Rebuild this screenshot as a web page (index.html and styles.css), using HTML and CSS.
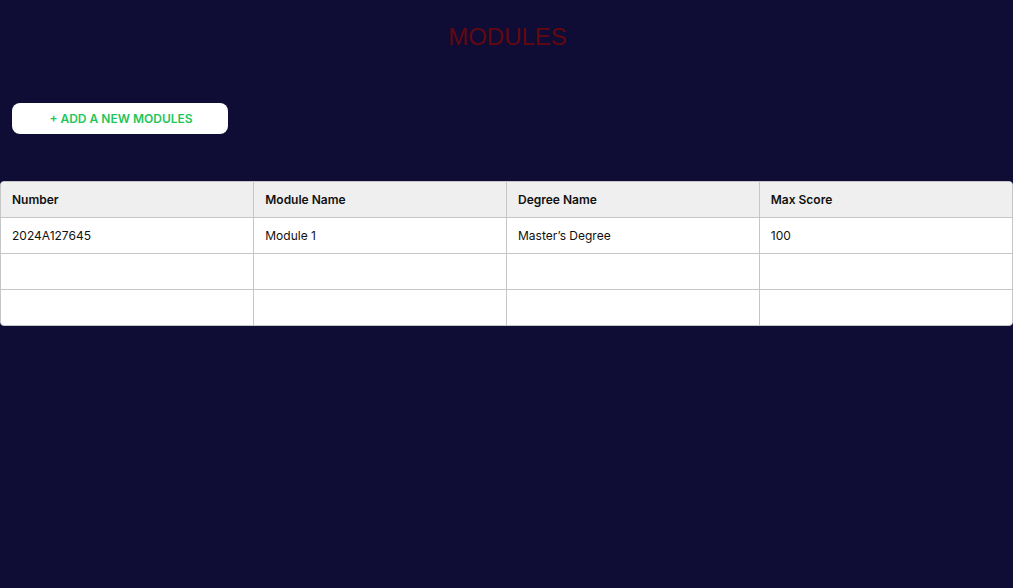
FILE: index.html
```html
<!DOCTYPE html>
<html>
<head>
<meta charset="utf-8">
<link rel="stylesheet" href="styles.css">
</head>
<body>
<main class="page">
  <h1 class="title">MODULES</h1>
  <div class="actions">
    <button class="add-btn">+ ADD A NEW MODULES</button>
  </div>
  <div class="table-wrap">
    <table class="modules">
      <thead>
        <tr><th>Number</th><th>Module Name</th><th>Degree Name</th><th>Max Score</th></tr>
      </thead>
      <tbody>
        <tr><td>2024A127645</td><td>Module 1</td><td>Master’s Degree</td><td>100</td></tr>
        <tr><td></td><td></td><td></td><td></td></tr>
        <tr><td></td><td></td><td></td><td></td></tr>
      </tbody>
    </table>
  </div>
</main>
</body>
</html>
```
FILE: styles.css
```css
html, body {
  margin: 0;
  padding: 0;
  background: #0f0c35;
  height: 100%;
}
.page {
  font-family: Inter, "Liberation Sans", sans-serif;
  padding-top: 22px;
}
.title {
  margin: 0;
  text-align: center;
  font-family: "Liberation Sans", Arial, sans-serif;
  font-weight: 400;
  font-size: 24px;
  line-height: 30px;
  color: #640810;
  padding-left: 2px;
}
.actions {
  padding: 51px 12px 0;
}
.add-btn {
  width: 216px;
  height: 31px;
  border: none;
  border-radius: 8px;
  background: #ffffff;
  color: #1fc55a;
  font-family: Inter, "Liberation Sans", sans-serif;
  font-weight: 600;
  font-size: 12px;
  letter-spacing: 0;
  cursor: pointer;
  padding: 0 0 0 2px;
}
.table-wrap {
  margin-top: 47px;
  border: 1px solid #c6c6c6;
  border-radius: 4px;
  overflow: hidden;
  background: #fff;
}
.modules {
  width: 100%;
  border-collapse: collapse;
  table-layout: fixed;
  font-size: 12px;
  color: #111;
}
.modules th, .modules td {
  padding: 0 11px;
  text-align: left;
  border-right: 1px solid #c6c6c6;
  border-bottom: 1px solid #c6c6c6;
  box-sizing: border-box;
}
.modules th:last-child, .modules td:last-child { border-right: none; }
.modules tbody tr:last-child td { border-bottom: none; }
.modules th {
  background: #efefef;
  font-weight: 600;
  height: 35px;
}
.modules td { height: 36px; font-weight: 400; }
```
